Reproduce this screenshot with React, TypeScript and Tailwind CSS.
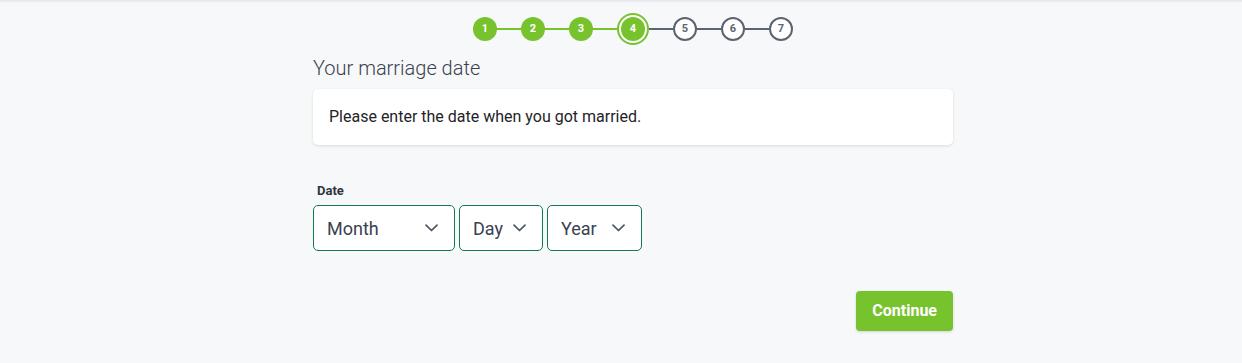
import React from "react";

const GREEN = "#77c32e";

function Chevron() {
  return (
    <svg width="13" height="8" viewBox="0 0 13 8" fill="none" className="shrink-0">
      <polyline points="1,1.2 6.5,6.5 12,1.2" stroke="#4b5563" strokeWidth="1.7" strokeLinecap="round" strokeLinejoin="round" />
    </svg>
  );
}

function Select({ label, width }: { label: string; width: string }) {
  return (
    <div className={`${width} h-[46px] flex items-center justify-between pl-[13px] pr-[16px] bg-white border border-[#137a52] rounded-[5px]`}>
      <span className="text-[18px] text-[#3a4150]">{label}</span>
      <Chevron />
    </div>
  );
}

function Step({ n, state }: { n: number; state: "done" | "current" | "todo" }) {
  if (state === "done") {
    return (
      <div className="w-[24px] h-[24px] rounded-full bg-[#77c32e] flex items-center justify-center text-white text-[11px] font-bold">
        {n}
      </div>
    );
  }
  if (state === "current") {
    return (
      <div className="w-[32px] h-[32px] rounded-full border-[2px] border-[#77c32e] bg-white flex items-center justify-center">
        <div className="w-[24px] h-[24px] rounded-full bg-[#77c32e] flex items-center justify-center text-white text-[11px] font-bold">
          {n}
        </div>
      </div>
    );
  }
  return (
    <div className="w-[24px] h-[24px] rounded-full border-[2px] border-[#5d6471] bg-white flex items-center justify-center text-[#5d6471] text-[11px] font-bold">
      {n}
    </div>
  );
}

function Line({ green }: { green: boolean }) {
  return <div className={`w-[24px] h-[2px] ${green ? "bg-[#77c32e]" : "bg-[#5d6471]"}`} />;
}

export default function App() {
  return (
    <div className="w-full h-[363px] bg-[#f7f8fa] font-['Roboto',sans-serif]" style={{ fontFamily: "Roboto, 'Liberation Sans', sans-serif" }}>
      <div className="h-[3px] bg-gradient-to-b from-[#e3e5e8] to-[#f7f8fa]" />
      <div className="pl-[24px] flex justify-center">
        <div className="w-[640px] flex flex-col">
          <div className="mt-[10px] h-[32px] flex items-center justify-center">
            <Step n={1} state="done" />
            <Line green />
            <Step n={2} state="done" />
            <Line green />
            <Step n={3} state="done" />
            <Line green />
            <Step n={4} state="current" />
            <Line green={false} />
            <Step n={5} state="todo" />
            <Line green={false} />
            <Step n={6} state="todo" />
            <Line green={false} />
            <Step n={7} state="todo" />
          </div>
          <h1 className="mt-[9px] text-[20px] leading-[28px] font-light text-[#3a4150]">Your marriage date</h1>
          <div className="mt-[7px] bg-white rounded-[5px] shadow-[0_1px_3px_rgba(0,0,0,0.12)] px-[16px] py-[16px]">
            <p className="text-[16px] leading-[24px] text-[#1f2328]">Please enter the date when you got married.</p>
          </div>
          <label className="mt-[38px] pl-[4px] text-[13px] leading-[16px] font-bold text-[#2f3542]">Date</label>
          <div className="mt-[6px] flex gap-[4px]">
            <Select label="Month" width="w-[142px]" />
            <Select label="Day" width="w-[84px]" />
            <Select label="Year" width="w-[95px]" />
          </div>
          <div className="mt-[40px] flex justify-end">
            <button className="h-[40px] px-[16px] rounded-[4px] bg-[#77c32e] text-white text-[16px] font-bold shadow-[0_1px_3px_rgba(0,0,0,0.15)]">
              Continue
            </button>
          </div>
        </div>
      </div>
    </div>
  );
}
